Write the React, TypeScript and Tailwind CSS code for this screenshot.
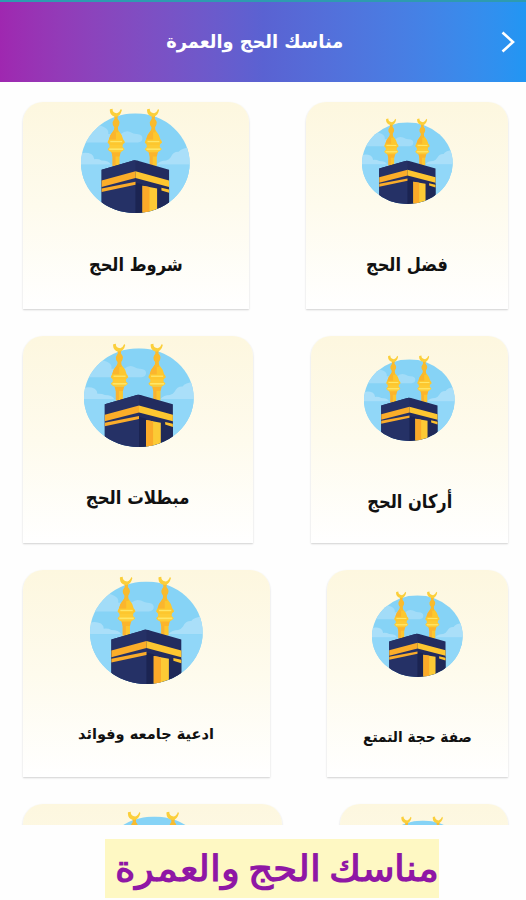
import React, { useId } from "react";

function Minaret({ x }: { x: number }) {
  return (
    <g transform={`translate(${x} 0)`}>
      <path d="M-10 200 L-10 160 H11 L11 200 Z" fill="#fdc72e" />
      <path d="M-10 200 L-10 160 H-1 V200 Z" fill="#f9b233" />
      <path d="M-14 158 H15 L11 172 H-10 Z" fill="#fcb52c" />
      <path d="M-25 150 Q-22 145 -19 143 L-20 134 H21 L20 143 Q24 145 26 150 Q22 155 14 159 H-13 Q-22 156 -25 150 Z" fill="#fdcb35" />
      <path d="M-25 130 Q-24 124 -21 121 Q-19 108 -9 97 L0 84 L10 97 Q20 108 22 121 Q26 124 27 130 Q22 135 17 137 H-16 Q-22 135 -25 130 Z" fill="#fdc72e" />
      <path d="M-21 121 Q-19 108 -9 97 L0 84 V121 Z" fill="#fab52e" />
      <path d="M-17 127 H19" stroke="#fee668" strokeWidth="4" />
      <path d="M-20 150 H22" stroke="#fee668" strokeWidth="5" />
      <path d="M-6 99 L-5 84 Q-11 76 -10 69 Q-7 62 -4 58 L-5 46 H6 L5 58 Q11 65 11 70 Q11 76 6 84 L7 99 Z" fill="#f9bb2d" />
      <path d="M-10 28 L-18 30 Q-19 34 -17 41 Q-12 52 1 52 Q14 50 18 32 L15 29 Q11 40 3 42 Q-11 40 -10 28 Z" fill="#fbcf3b" />
    </g>
  );
}

function Kaaba({ className }: { className: string }) {
  const id = useId();
  return (
    <svg viewBox="34 26 328 316" preserveAspectRatio="none" className={`shrink-0 ${className}`}>
      <defs>
        <clipPath id={id}>
          <ellipse cx="197.500" cy="192" rx="163.500" ry="150" />
        </clipPath>
      </defs>
      <g clipPath={`url(#${id})`}>
        <rect x="34" y="42" width="328" height="300" fill="#86d3f6" />
        <rect x="34" y="196" width="328" height="150" fill="#91d7f8" />
        <path d="M34 130 L60 85 Q85 72 104 84 Q118 90 116 104 H154 Q168 92 182 98 Q194 105 202 104 Q219 105 219 117 Q219 128 205 130 Z" fill="#a2dcf8" />
        <path d="M34 196 V162 Q52 158 66 165 Q73 170 74 180 Q88 179 96 184 Q118 184 124 196 Z" fill="#aadff9" />
        <path d="M262 196 Q272 184 290 184 Q300 181 304 174 Q312 157 328 158 Q335 147 362 144 V196 Z" fill="#aadff9" />
      </g>
      <Minaret x={139} />
      <Minaret x={251} />
      <g clipPath={`url(#${id})`}>
        <path d="M96 212 L184 186 Q197 181 210 186 L299 212 V345 H96 Z" fill="#222c5f" />
        <path d="M96 212 L184 186 Q197 181 198 184 V345 H96 Z" fill="#253166" />
        <path d="M198 250 L220 256 V345 H198 Z" fill="#1b2452" />
        <path d="M264 268 H299 V345 H264 Z" fill="#1f2958" />
        <path d="M96 244 L198 216 V237 L96 264 Z" fill="#fbad29" />
        <path d="M198 216 L299 244 V264 L198 237 Z" fill="#fdc630" />
        <path d="M96 268 L198 248 V257 L96 279 Z" fill="#f9ac2b" />
        <path d="M276 266 L299 271 V281 L276 274 Z" fill="#fcc12d" />
        <path d="M219 260 L263 268 V345 H219 Z" fill="#fcca35" />
        <path d="M219 260 L240 264 V345 H219 Z" fill="#fbaa29" />
      </g>
    </svg>
  );
}

type CardProps = { label: string; card: string; icon: string; text: string };

function Card({ label, card, icon, text }: CardProps) {
  return (
    <div className={`flex h-[207px] shrink-0 flex-col rounded-t-[20px] bg-linear-to-b from-[#fdf7df] via-[#fefbed] to-white shadow-[0_1px_2px_rgba(0,0,0,0.18)] ${card}`}>
      <Kaaba className={icon} />
      <span className={`origin-center self-center font-bold whitespace-nowrap text-[#111] ${text}`}>{label}</span>
    </div>
  );
}

const rows: CardProps[][] = [
  [
    { label: "فضل الحج", card: "w-[202px]", icon: "mt-[16px] ml-[56px] h-[86px] w-[91px]", text: "mt-[48px] scale-x-[0.855] text-[19px] leading-6" },
    { label: "شروط الحج", card: "w-[226px]", icon: "mt-[6px] ml-[58px] h-[105px] w-[109px]", text: "mt-[39px] scale-x-[0.855] text-[19px] leading-6" },
  ],
  [
    { label: "أركان الحج", card: "w-[197px]", icon: "mt-[19px] ml-[53px] h-[86px] w-[91px]", text: "mt-[48px] scale-x-[0.855] text-[19px] leading-6" },
    { label: "مبطلات الحج", card: "w-[230px]", icon: "mt-[7px] ml-[61px] h-[104px] w-[110px]", text: "mt-[38px] scale-x-[0.87] text-[19px] leading-6" },
  ],
  [
    { label: "صفة حجة التمتع", card: "w-[181px]", icon: "mt-[21px] ml-[45px] h-[86px] w-[91px]", text: "mt-[48px] scale-x-[0.915] text-[15px] leading-6" },
    { label: "ادعية جامعه وفوائد", card: "w-[247px]", icon: "mt-[6px] ml-[67px] h-[108px] w-[113px]", text: "mt-[38px] scale-x-[0.97] text-[15px] leading-6" },
  ],
  [
    { label: "", card: "w-[168px]", icon: "mt-[12px] ml-[37px] h-[87px] w-[92px]", text: "" },
    { label: "", card: "w-[259px]", icon: "mt-[7px] ml-[75px] h-[108px] w-[113px]", text: "" },
  ],
];

export default function App() {
  return (
    <div dir="rtl" className="flex h-[900px] w-[526px] flex-col overflow-hidden bg-[#fefefe] font-['DejaVu_Sans',sans-serif]">
      <header className="flex h-[82px] shrink-0 items-center border-t-2 border-[#2e9bb0] bg-linear-to-r from-[#9f27b0] via-[#5a62d2] to-[#2196f3]">
        <svg viewBox="0 0 14 22" className="ms-[11px] h-[22px] w-[14px]" fill="none" stroke="white" strokeWidth="2.600">
          <path d="M1.500 1.500 L12 11 L1.500 20.500" />
        </svg>
        <h1 className="ms-[158px] mb-[2px] origin-right scale-x-[0.935] text-[19px] font-bold whitespace-nowrap text-white">مناسك الحج والعمرة</h1>
      </header>
      <main dir="ltr" className="flex h-[743px] shrink-0 flex-col gap-[27px] overflow-hidden pt-[20px] pr-[18px] pl-[23px]">
        {rows.map((row, i) => (
          <div key={i} className="flex shrink-0 flex-row-reverse justify-between">
            {row.map((c, j) => (
              <Card key={j} {...c} />
            ))}
          </div>
        ))}
      </main>
      <footer className="flex h-[75px] shrink-0 pt-[14px] pr-[87px]">
        <div className="flex h-[59px] w-[334px] items-center bg-[#fef8c3]">
          <span className="mt-[2px] origin-right scale-x-[1.085] font-serif text-[36px] font-bold whitespace-nowrap text-[#8f17a5]">مناسك الحج والعمرة</span>
        </div>
      </footer>
    </div>
  );
}
